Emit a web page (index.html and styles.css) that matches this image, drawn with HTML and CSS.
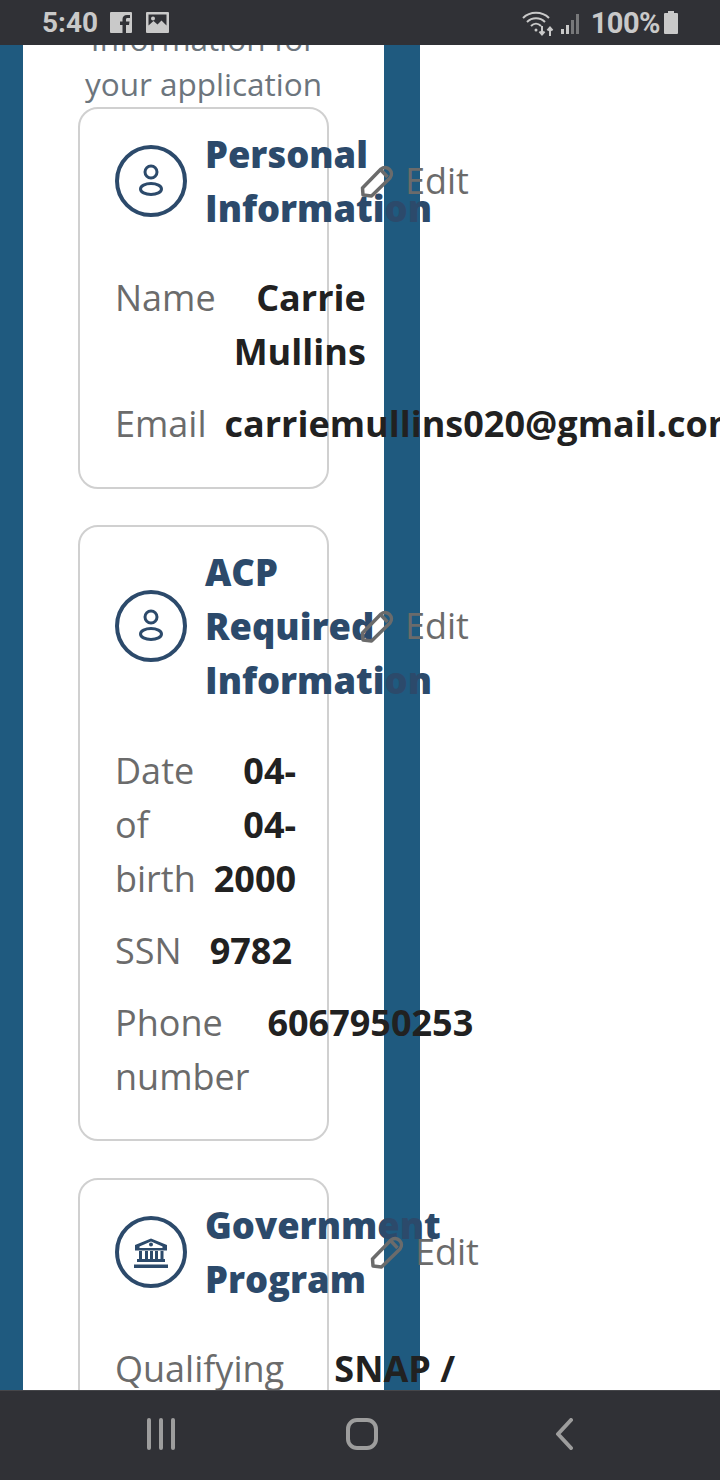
FILE: index.html
```html
<!DOCTYPE html>
<html>
<head>
    <title>Review Application</title>
    <link rel="stylesheet" href="styles.css">
</head>
<body>
    <div class="status-bar">
        <div class="status-left">
            <span class="clock">5:40</span>
            <svg class="notif" width="23" height="21" viewBox="0 0 23 21"><path fill="#c9c9c9" d="M1 0h20a1 1 0 0 1 1 1v19a1 1 0 0 1-1 1h-5v-8h3l.5-3.500H16V7.500c0-1 .5-1.500 1.500-1.500H20V3h-3c-3 0-4.500 1.800-4.500 4.200v2.300H10V13h2.500v8H1a1 1 0 0 1-1-1V1a1 1 0 0 1 1-1z"/></svg>
            <svg class="notif" width="23" height="21" viewBox="0 0 23 21"><path fill="#c9c9c9" fill-rule="evenodd" d="M1 0h21a1 1 0 0 1 1 1v19a1 1 0 0 1-1 1H1a1 1 0 0 1-1-1V1a1 1 0 0 1 1-1zm1.500 2.500v11l5-4.500 4 3.500 4-4 5 5v-11zM7 4.500a2 2 0 1 1 0 4 2 2 0 0 1 0-4z"/></svg>
        </div>
        <div class="status-right">
            <svg class="wifi" width="36" height="28" viewBox="0 0 36 28" fill="none" stroke="#c9c9c9" stroke-width="2"><path d="M1 9c7-7 19-7 26 0"/><path d="M5 13c5-5 13-5 18 0"/><path d="M9 17c3-3 7-3 10 0"/><circle cx="14" cy="21" r="1.500" fill="#c9c9c9" stroke="none"/><path d="M20 17v8m-2.500-2.500l2.500 3 2.500-3M28 27v-8m-2.500 2.500l2.500-3 2.500 3"/></svg>
            <svg class="signal" width="22" height="24" viewBox="0 0 22 24"><path fill="#c9c9c9" d="M1 18h3v5H1zM6 14h3v9H6z"/><path fill="#77787a" d="M11 9h3v14h-3zM16 3h3v20h-3z"/></svg>
            <span class="battery-pct">100%</span>
            <svg width="16" height="23" viewBox="0 0 16 23"><path fill="#c9c9c9" d="M5 0h6v2h3a1 1 0 0 1 1 1v19a1 1 0 0 1-1 1H2a1 1 0 0 1-1-1V3a1 1 0 0 1 1-1h3z"/></svg>
        </div>
    </div>

    <div class="viewport">
        <div class="page">
            <p class="intro">Information for your application</p>

            <div class="card">
                <div class="card-head">
                    <svg class="round-icon" width="72" height="72" viewBox="0 0 72 72" fill="none" stroke="#2c4a6b"><circle cx="36" cy="36" r="34" stroke-width="4"/><circle cx="36" cy="27" r="6" stroke-width="3"/><ellipse cx="36" cy="44" rx="10.500" ry="5.500" stroke-width="3"/></svg>
                    <h3 class="card-title">Personal Information</h3>
                    <a class="edit">
                        <svg width="36" height="36" viewBox="0 0 36 36" fill="none" stroke="#6b6b6b" stroke-width="3.500" stroke-linejoin="round"><path d="M4 32l-.5-7L22 6a6.400 6.400 0 0 1 9 9L12.500 33z"/><path d="M22 7l6.500 7"/></svg>
                        <span>Edit</span>
                    </a>
                </div>
                <div class="row"><span class="label">Name</span><span class="value">Carrie Mullins</span></div>
                <div class="row"><span class="label">Email</span><span class="value">carriemullins020@gmail.com</span></div>
            </div>

            <div class="card">
                <div class="card-head">
                    <svg class="round-icon" width="72" height="72" viewBox="0 0 72 72" fill="none" stroke="#2c4a6b"><circle cx="36" cy="36" r="34" stroke-width="4"/><circle cx="36" cy="27" r="6" stroke-width="3"/><ellipse cx="36" cy="44" rx="10.500" ry="5.500" stroke-width="3"/></svg>
                    <h3 class="card-title">ACP Required Information</h3>
                    <a class="edit">
                        <svg width="36" height="36" viewBox="0 0 36 36" fill="none" stroke="#6b6b6b" stroke-width="3.500" stroke-linejoin="round"><path d="M4 32l-.5-7L22 6a6.400 6.400 0 0 1 9 9L12.500 33z"/><path d="M22 7l6.500 7"/></svg>
                        <span>Edit</span>
                    </a>
                </div>
                <div class="row"><span class="label">Date of birth</span><span class="value">04-04-2000</span></div>
                <div class="row"><span class="label">SSN</span><span class="value">9782</span></div>
                <div class="row"><span class="label">Phone number</span><span class="value">6067950253</span></div>
            </div>

            <div class="card">
                <div class="card-head">
                    <svg class="round-icon" width="72" height="72" viewBox="0 0 72 72" fill="none" stroke="#2c4a6b"><circle cx="36" cy="36" r="34" stroke-width="4"/><path fill="#2c4a6b" stroke="none" fill-rule="evenodd" d="M36 22.500l16 6.500v5.500H20V29zm0 3l-11.500 5v1.500h23V30.500zM36 26.500a2 2 0 1 1 0 4 2 2 0 0 1 0-4zM24 34h3v9h-3zM30 34h3v9h-3zM35 34h3v9h-3zM40 34h3v9h-3zM45.500 34h3v9h-3zM22 43h28v3H22zM19 48.500h34v3.500H19z"/></svg>
                    <h3 class="card-title card-title-wide">Government Program</h3>
                    <a class="edit">
                        <svg width="36" height="36" viewBox="0 0 36 36" fill="none" stroke="#6b6b6b" stroke-width="3.500" stroke-linejoin="round"><path d="M4 32l-.5-7L22 6a6.400 6.400 0 0 1 9 9L12.500 33z"/><path d="M22 7l6.500 7"/></svg>
                        <span>Edit</span>
                    </a>
                </div>
                <div class="row"><span class="label">Qualifying program</span><span class="value value-wide">SNAP / Food Stamps</span></div>
            </div>
        </div>
    </div>

    <div class="nav-bar">
        <svg width="30" height="32" viewBox="0 0 30 32" stroke="#9d9d9d" stroke-width="4" stroke-linecap="round"><path d="M3 2v28M15 2v28M27 2v28"/></svg>
        <svg class="home" width="32" height="32" viewBox="0 0 32 32" fill="none" stroke="#9d9d9d" stroke-width="4"><rect x="2" y="2" width="28" height="28" rx="9"/></svg>
        <svg width="18" height="32" viewBox="0 0 18 32" fill="none" stroke="#9d9d9d" stroke-width="4" stroke-linecap="round" stroke-linejoin="round"><path d="M16 2L3 16l13 14"/></svg>
    </div>
</body>
</html>
```

FILE: styles.css
```css
html, body {
    margin: 0;
    height: 100%;
    overflow: hidden;
}
body {
    display: flex;
    flex-direction: column;
    font-family: "Open Sans", Arial, sans-serif;
    background-color: #fff;
}
.status-bar {
    height: 45px;
    flex-shrink: 0;
    display: flex;
    justify-content: space-between;
    align-items: center;
    padding: 0 41px 0 42px;
    background-color: #303136;
    color: #c9c9c9;
    font-family: Roboto, Arial, sans-serif;
    font-weight: 700;
    font-size: 28px;
    position: relative;
    z-index: 2;
}
.status-left, .status-right {
    display: flex;
    align-items: center;
}
.clock {
    margin-right: 12px;
}
.notif {
    margin-right: 13px;
}
.wifi {
    margin-right: 2px;
}
.signal {
    margin-right: 9px;
}
.battery-pct {
    margin-right: 3px;
    font-size: 29px;
    letter-spacing: -0.5px;
}
.viewport {
    flex: 1;
    overflow: hidden;
    min-height: 0;
}
.page {
    width: 361px;
    min-height: 100%;
    border-left: 23px solid #1f5a7f;
    border-right: 36px solid #1f5a7f;
    margin-top: -29px;
    padding-bottom: 200px;
}
.intro {
    width: 251px;
    margin: 0 0 1px 55px;
    font-size: 31.5px;
    line-height: 45px;
    color: #6c757d;
    text-align: center;
}
.card {
    width: 251px;
    box-sizing: border-box;
    margin: 0 0 36.4px 55px;
    padding: 18px 36px 35.6px 35px;
    border: 2px solid #d0d0d0;
    border-radius: 20px;
}
.card-head {
    display: flex;
    align-items: center;
    margin-bottom: 36.4px;
}
.round-icon {
    flex-shrink: 0;
    margin-right: 18px;
}
.card-title {
    flex-shrink: 0;
    width: 154px;
    margin: 0;
    font-size: 36.3px;
    line-height: 54px;
    font-weight: 800;
    color: #2c4a6b;
}
.card-title-wide {
    width: 164px;
}
.edit {
    flex-shrink: 0;
    display: flex;
    align-items: center;
    font-size: 36px;
    line-height: 54px;
    color: #6b6b6b;
}
.edit svg {
    margin-right: 10px;
}
.row {
    display: flex;
    justify-content: space-between;
    gap: 18px;
    width: 177px;
    margin-bottom: 18px;
    font-size: 36px;
    line-height: 54px;
}
.row:last-child {
    margin-bottom: 0;
}
.label {
    flex: 0 1 0;
    color: #6b6b6b;
}
.value {
    flex: 0 1 0;
    font-weight: 700;
    color: #212121;
    text-align: right;
}
.value-wide {
    flex: 0 0 153px;
}
.nav-bar {
    height: 90px;
    flex-shrink: 0;
    box-sizing: border-box;
    display: flex;
    align-items: center;
    padding: 0 147px 4px 146px;
    justify-content: space-between;
    background-color: #303136;
    border-top: 1px solid #45464a;
    position: relative;
    z-index: 2;
}
.home {
    margin-right: 8px;
}
```
